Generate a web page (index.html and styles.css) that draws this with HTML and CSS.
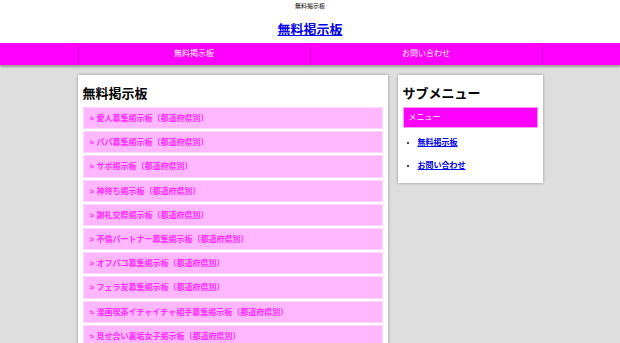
FILE: index.html
```html
<!DOCTYPE html>
<html>
<head>
    <title>無料掲示板</title>
    <meta charset="utf-8">
    <link rel="stylesheet" href="styles.css">
</head>
<body>
    <header class="site-head">
        <p class="tagline">無料掲示板</p>
        <h1 class="site-title"><a href="#">無料掲示板</a></h1>
    </header>

    <nav class="global-nav">
        <ul>
            <li><a href="#">無料掲示板</a></li>
            <li><a href="#">お問い合わせ</a></li>
        </ul>
    </nav>

    <div class="wrap">
        <main class="card main">
            <h2>無料掲示板</h2>
            <ul class="board-list">
                <li><a href="#">&gt; 愛人募集掲示板（都道府県別）</a></li>
                <li><a href="#">&gt; パパ募集掲示板（都道府県別）</a></li>
                <li><a href="#">&gt; サポ掲示板（都道府県別）</a></li>
                <li><a href="#">&gt; 神待ち掲示板（都道府県別）</a></li>
                <li><a href="#">&gt; 謝礼交際掲示板（都道府県別）</a></li>
                <li><a href="#">&gt; 不倫パートナー募集掲示板（都道府県別）</a></li>
                <li><a href="#">&gt; オフパコ募集掲示板（都道府県別）</a></li>
                <li><a href="#">&gt; フェラ友募集掲示板（都道府県別）</a></li>
                <li><a href="#">&gt; 漫画喫茶イチャイチャ相手募集掲示板（都道府県別）</a></li>
                <li><a href="#">&gt; 見せ合い裏垢女子掲示板（都道府県別）</a></li>
            </ul>
        </main>

        <aside class="card side">
            <h2>サブメニュー</h2>
            <div class="side-bar">メニュー</div>
            <ul class="side-list">
                <li><a href="#">無料掲示板</a></li>
                <li><a href="#">お問い合わせ</a></li>
            </ul>
        </aside>
    </div>
</body>
</html>
```

FILE: styles.css
```css
body {
    margin: 0;
    background: #dedede;
    font-family: "Liberation Sans", "Noto Sans CJK JP", sans-serif;
    color: #000;
}
.site-head {
    background: #fff;
    text-align: center;
    padding: 2px 0 5px;
}
.tagline {
    margin: 0;
    font-size: 6px;
    line-height: 9px;
}
.site-title {
    margin: 10px 0 0;
    font-size: 13px;
    line-height: 17px;
}
.site-title a {
    color: #0000ee;
}
.global-nav {
    background: #ff00ff;
    height: 22px;
    box-shadow: 0 2px 2px rgba(0, 0, 0, 0.3);
}
.global-nav ul {
    display: flex;
    width: 464px;
    margin: 0 auto;
    padding: 0;
    list-style: none;
    border-left: 1px solid rgba(0, 0, 0, 0.15);
}
.global-nav li {
    flex: 1;
    border-right: 1px solid rgba(0, 0, 0, 0.15);
    text-align: center;
}
.global-nav a {
    display: block;
    line-height: 22px;
    font-size: 8px;
    color: #fff;
    text-decoration: none;
}
.wrap {
    display: flex;
    align-items: flex-start;
    gap: 10px;
    width: 465px;
    margin: 10px auto 0;
}
.card {
    background: #fff;
    box-shadow: 0 0 3px rgba(0, 0, 0, 0.35);
    padding: 5px 5px;
}
.main {
    width: 300px;
}
.side {
    width: 135px;
    padding-bottom: 11px;
}
.card h2 {
    margin: 4px 0 3px;
    font-size: 13px;
    line-height: 20px;
}
.board-list {
    margin: 0;
    padding: 0;
    list-style: none;
}
.board-list li {
    border-bottom: 2px solid #fff;
}
.board-list a {
    display: block;
    height: 22.2px;
    line-height: 21px;
    padding-left: 6px;
    background: #ffb7ff;
    border: 1px solid #ffd6ff;
    box-sizing: border-box;
    color: #ff2eff;
    font-size: 8px;
    font-weight: bold;
    text-decoration: none;
}
.side-bar {
    background: #ff00ff;
    border: 1px solid #ff9cff;
    height: 21px;
    box-sizing: border-box;
    line-height: 19px;
    padding-left: 5px;
    color: #fff;
    font-size: 8px;
}
.side-list {
    margin: 8px 0 0;
    padding-left: 15px;
}
.side-list li {
    font-size: 8px;
    line-height: 13px;
    margin-bottom: 10px;
}
.side-list li:last-child {
    margin-bottom: 0;
}
.side-list a {
    color: #0000ee;
    font-weight: bold;
}
```
